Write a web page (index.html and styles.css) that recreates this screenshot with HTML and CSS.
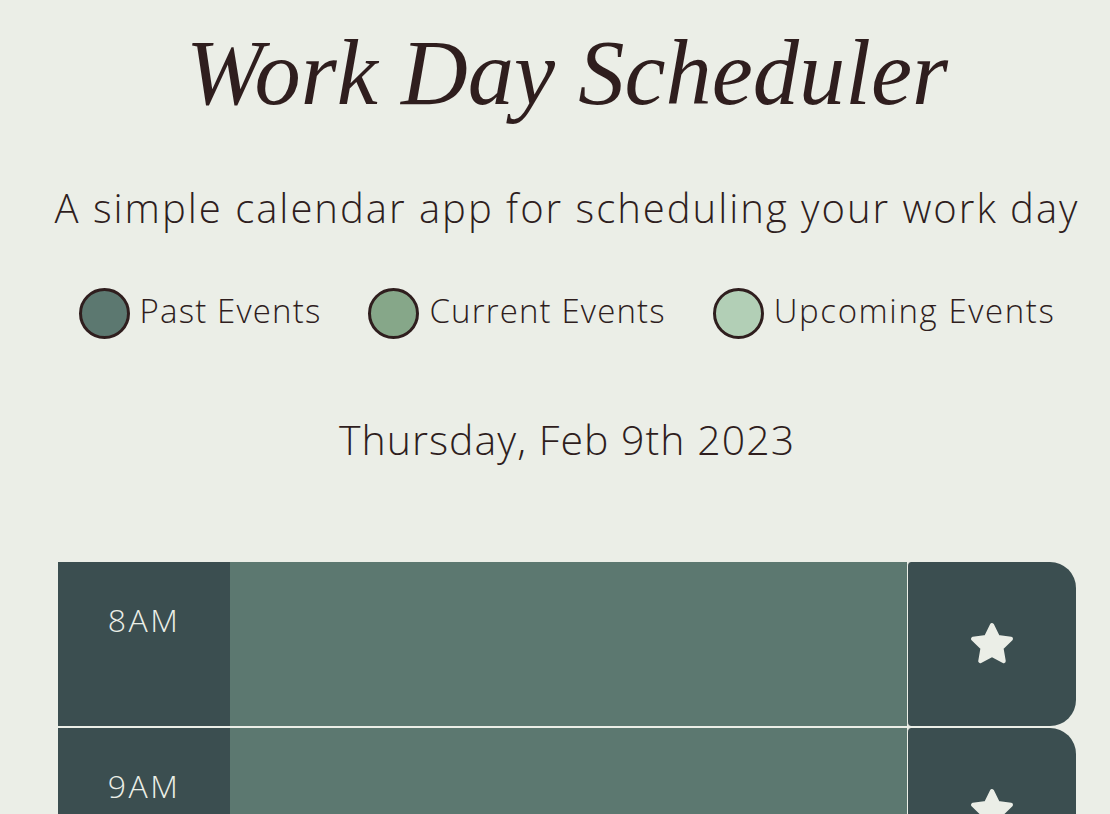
FILE: index.html
```html
<!DOCTYPE html>
<html lang="en">
<head>
<meta charset="utf-8">
<title>Work Day Scheduler</title>
<link rel="stylesheet" href="styles.css">
</head>
<body>
<div class="page">
  <header class="header">
    <h1 class="title">Work Day Scheduler</h1>
    <p class="lead">A simple calendar app for scheduling your work day</p>
    <div class="legend">
      <div class="legend-item"><span class="dot dot-past"></span><span class="legend-label">Past Events</span></div>
      <div class="legend-item"><span class="dot dot-present"></span><span class="legend-label">Current Events</span></div>
      <div class="legend-item"><span class="dot dot-future"></span><span class="legend-label legend-label-wide">Upcoming Events</span></div>
    </div>
    <p class="date">Thursday, Feb 9th 2023</p>
  </header>
  <main class="schedule">
    <div class="time-block">
      <div class="hour">8AM</div>
      <textarea class="description past"></textarea>
      <button class="save-btn" aria-label="save"><svg class="star" viewBox="0 0 48 48"><polygon points="24,5 29.88,16.91 43.02,18.82 33.51,28.09 35.76,41.18 24,35 12.24,41.18 14.49,28.09 4.98,18.82 18.12,16.91"/></svg></button>
    </div>
    <div class="time-block">
      <div class="hour">9AM</div>
      <textarea class="description past"></textarea>
      <button class="save-btn" aria-label="save"><svg class="star" viewBox="0 0 48 48"><polygon points="24,5 29.88,16.91 43.02,18.82 33.51,28.09 35.76,41.18 24,35 12.24,41.18 14.49,28.09 4.98,18.82 18.12,16.91"/></svg></button>
    </div>
    <div class="time-block">
      <div class="hour">10AM</div>
      <textarea class="description past"></textarea>
      <button class="save-btn" aria-label="save"><svg class="star" viewBox="0 0 48 48"><polygon points="24,5 29.88,16.91 43.02,18.82 33.51,28.09 35.76,41.18 24,35 12.24,41.18 14.49,28.09 4.98,18.82 18.12,16.91"/></svg></button>
    </div>
    <div class="time-block">
      <div class="hour">11AM</div>
      <textarea class="description past"></textarea>
      <button class="save-btn" aria-label="save"><svg class="star" viewBox="0 0 48 48"><polygon points="24,5 29.88,16.91 43.02,18.82 33.51,28.09 35.76,41.18 24,35 12.24,41.18 14.49,28.09 4.98,18.82 18.12,16.91"/></svg></button>
    </div>
  </main>
</div>
</body>
</html>
```

FILE: styles.css
```css
html, body {
  margin: 0;
  padding: 0;
}

body {
  background: #ebeee7;
  color: #2f1e1e;
  font-family: "Open Sans", "Liberation Sans", sans-serif;
  font-weight: 300;
}

.page {
  padding: 0 10px 0 34px;
}

.header {
  display: flex;
  flex-direction: column;
  align-items: center;
  text-align: center;
}

.title {
  margin: 18px 0 0;
  font-family: "Liberation Serif", serif;
  font-style: italic;
  font-weight: 400;
  font-size: 92.5px;
  line-height: 1.2;
}

.lead {
  margin: 55px 0 0;
  font-size: 40px;
  line-height: 1.2;
  letter-spacing: 2px;
}

.legend {
  margin-top: 56px;
  display: flex;
  align-items: center;
  gap: 47px;
}

.legend-item {
  display: flex;
  align-items: center;
  gap: 10px;
}

.dot {
  box-sizing: border-box;
  width: 51px;
  height: 51px;
  border-radius: 50%;
  border: 3px solid #2f1e1e;
}

.dot-past { background: #5c7870; }
.dot-present { background: #86a789; }
.dot-future { background: #b2cfb6; }

.legend-label {
  font-size: 33px;
  line-height: 1.2;
  padding-bottom: 6px;
  letter-spacing: 1.15px;
}

.legend-label-wide {
  letter-spacing: 1.6px;
}

.date {
  margin: 76px 0 0;
  font-size: 41px;
  line-height: 1.2;
  letter-spacing: 1.05px;
}

.schedule {
  margin: 98px 24px 0;
  display: flex;
  flex-direction: column;
  gap: 2px;
}

.time-block {
  display: flex;
  height: 164px;
}

.hour {
  box-sizing: border-box;
  width: 172px;
  flex: none;
  background: #3b4e50;
  color: #ebeee7;
  text-align: center;
  font-size: 32px;
  line-height: 1.5;
  padding-top: 34px;
  letter-spacing: 2.5px;
}

.description {
  flex: 1;
  margin: 0;
  border: none;
  resize: none;
  outline: none;
  font-family: inherit;
}

.past { background: #5c7870; }
.present { background: #86a789; }
.future { background: #b2cfb6; }

.save-btn {
  box-sizing: border-box;
  width: 169px;
  flex: none;
  margin: 0;
  padding: 0;
  border: none;
  border-left: 1px solid #ebeee7;
  border-radius: 4px 26px 26px 4px;
  background: #3b4e50;
  display: flex;
  align-items: center;
  justify-content: center;
}

.star {
  width: 48px;
  height: 48px;
  display: block;
}

.star polygon {
  fill: #ebeee7;
  stroke: #ebeee7;
  stroke-width: 4;
  stroke-linejoin: round;
}
```
